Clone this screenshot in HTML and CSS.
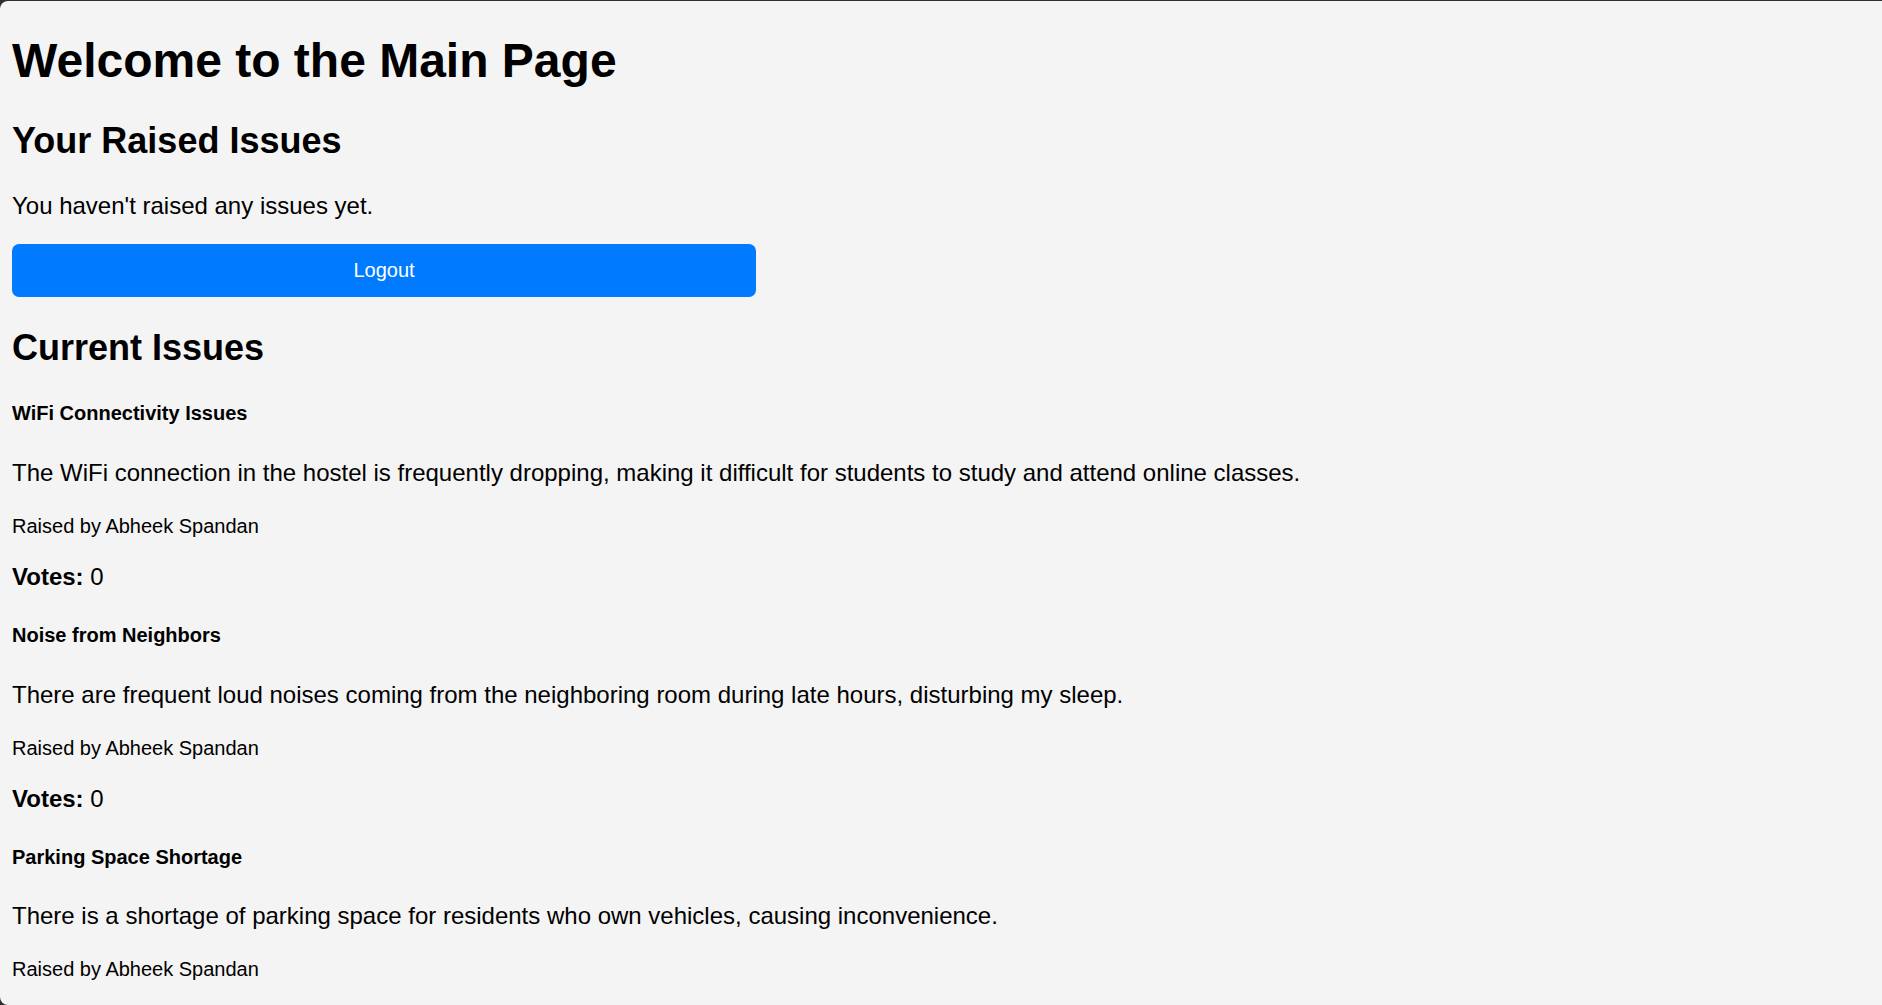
FILE: index.html
```html
<!DOCTYPE html>
<html lang="en">
<head>
<meta charset="utf-8">
<title>Main Page</title>
<link rel="stylesheet" href="styles.css">
</head>
<body>
<h1 class="page-title">Welcome to the Main Page</h1>
<h2 class="section-title">Your Raised Issues</h2>
<p class="text">You haven't raised any issues yet.</p>
<button class="logout-btn" type="button">Logout</button>
<h2 class="section-title">Current Issues</h2>
<div class="issue">
  <h5 class="issue-title">WiFi Connectivity Issues</h5>
  <p class="text">The WiFi connection in the hostel is frequently dropping, making it difficult for students to study and attend online classes.</p>
  <p class="text"><small class="raised">Raised by Abheek Spandan</small></p>
  <p class="text"><strong>Votes:</strong> 0</p>
</div>
<div class="issue">
  <h5 class="issue-title">Noise from Neighbors</h5>
  <p class="text">There are frequent loud noises coming from the neighboring room during late hours, disturbing my sleep.</p>
  <p class="text"><small class="raised">Raised by Abheek Spandan</small></p>
  <p class="text"><strong>Votes:</strong> 0</p>
</div>
<div class="issue">
  <h5 class="issue-title">Parking Space Shortage</h5>
  <p class="text">There is a shortage of parking space for residents who own vehicles, causing inconvenience.</p>
  <p class="text"><small class="raised">Raised by Abheek Spandan</small></p>
</div>
</body>
</html>
```
FILE: styles.css
```css
html {
  height: 100%;
  overflow: hidden;
  background: #2e2e2e;
}
body {
  display: flow-root;
  box-sizing: border-box;
  height: calc(100% - 1px);
  margin: 1px 0 0 0;
  padding: 0 12px;
  overflow: hidden;
  background: #f4f4f4;
  border-radius: 8px 0 0 8px;
  color: #000;
  font-family: "Liberation Sans", Arial, sans-serif;
  font-size: 24px;
}
.page-title {
  font-size: 48px;
  font-weight: bold;
  margin: 32px 0;
}
.section-title {
  font-size: 36px;
  font-weight: bold;
  margin: 30px 0;
}
.text {
  font-size: 24px;
  margin: 24px 0;
}
.raised {
  font-size: 20px;
}
.issue-title {
  font-size: 20px;
  font-weight: bold;
  margin: 33.4px 0;
}
.logout-btn {
  display: block;
  width: 744px;
  height: 53px;
  margin: 0;
  padding: 0;
  border: none;
  border-radius: 7px;
  background: #007bff;
  color: #fff;
  font-family: "Liberation Sans", Arial, sans-serif;
  font-size: 20px;
  cursor: pointer;
}
```
